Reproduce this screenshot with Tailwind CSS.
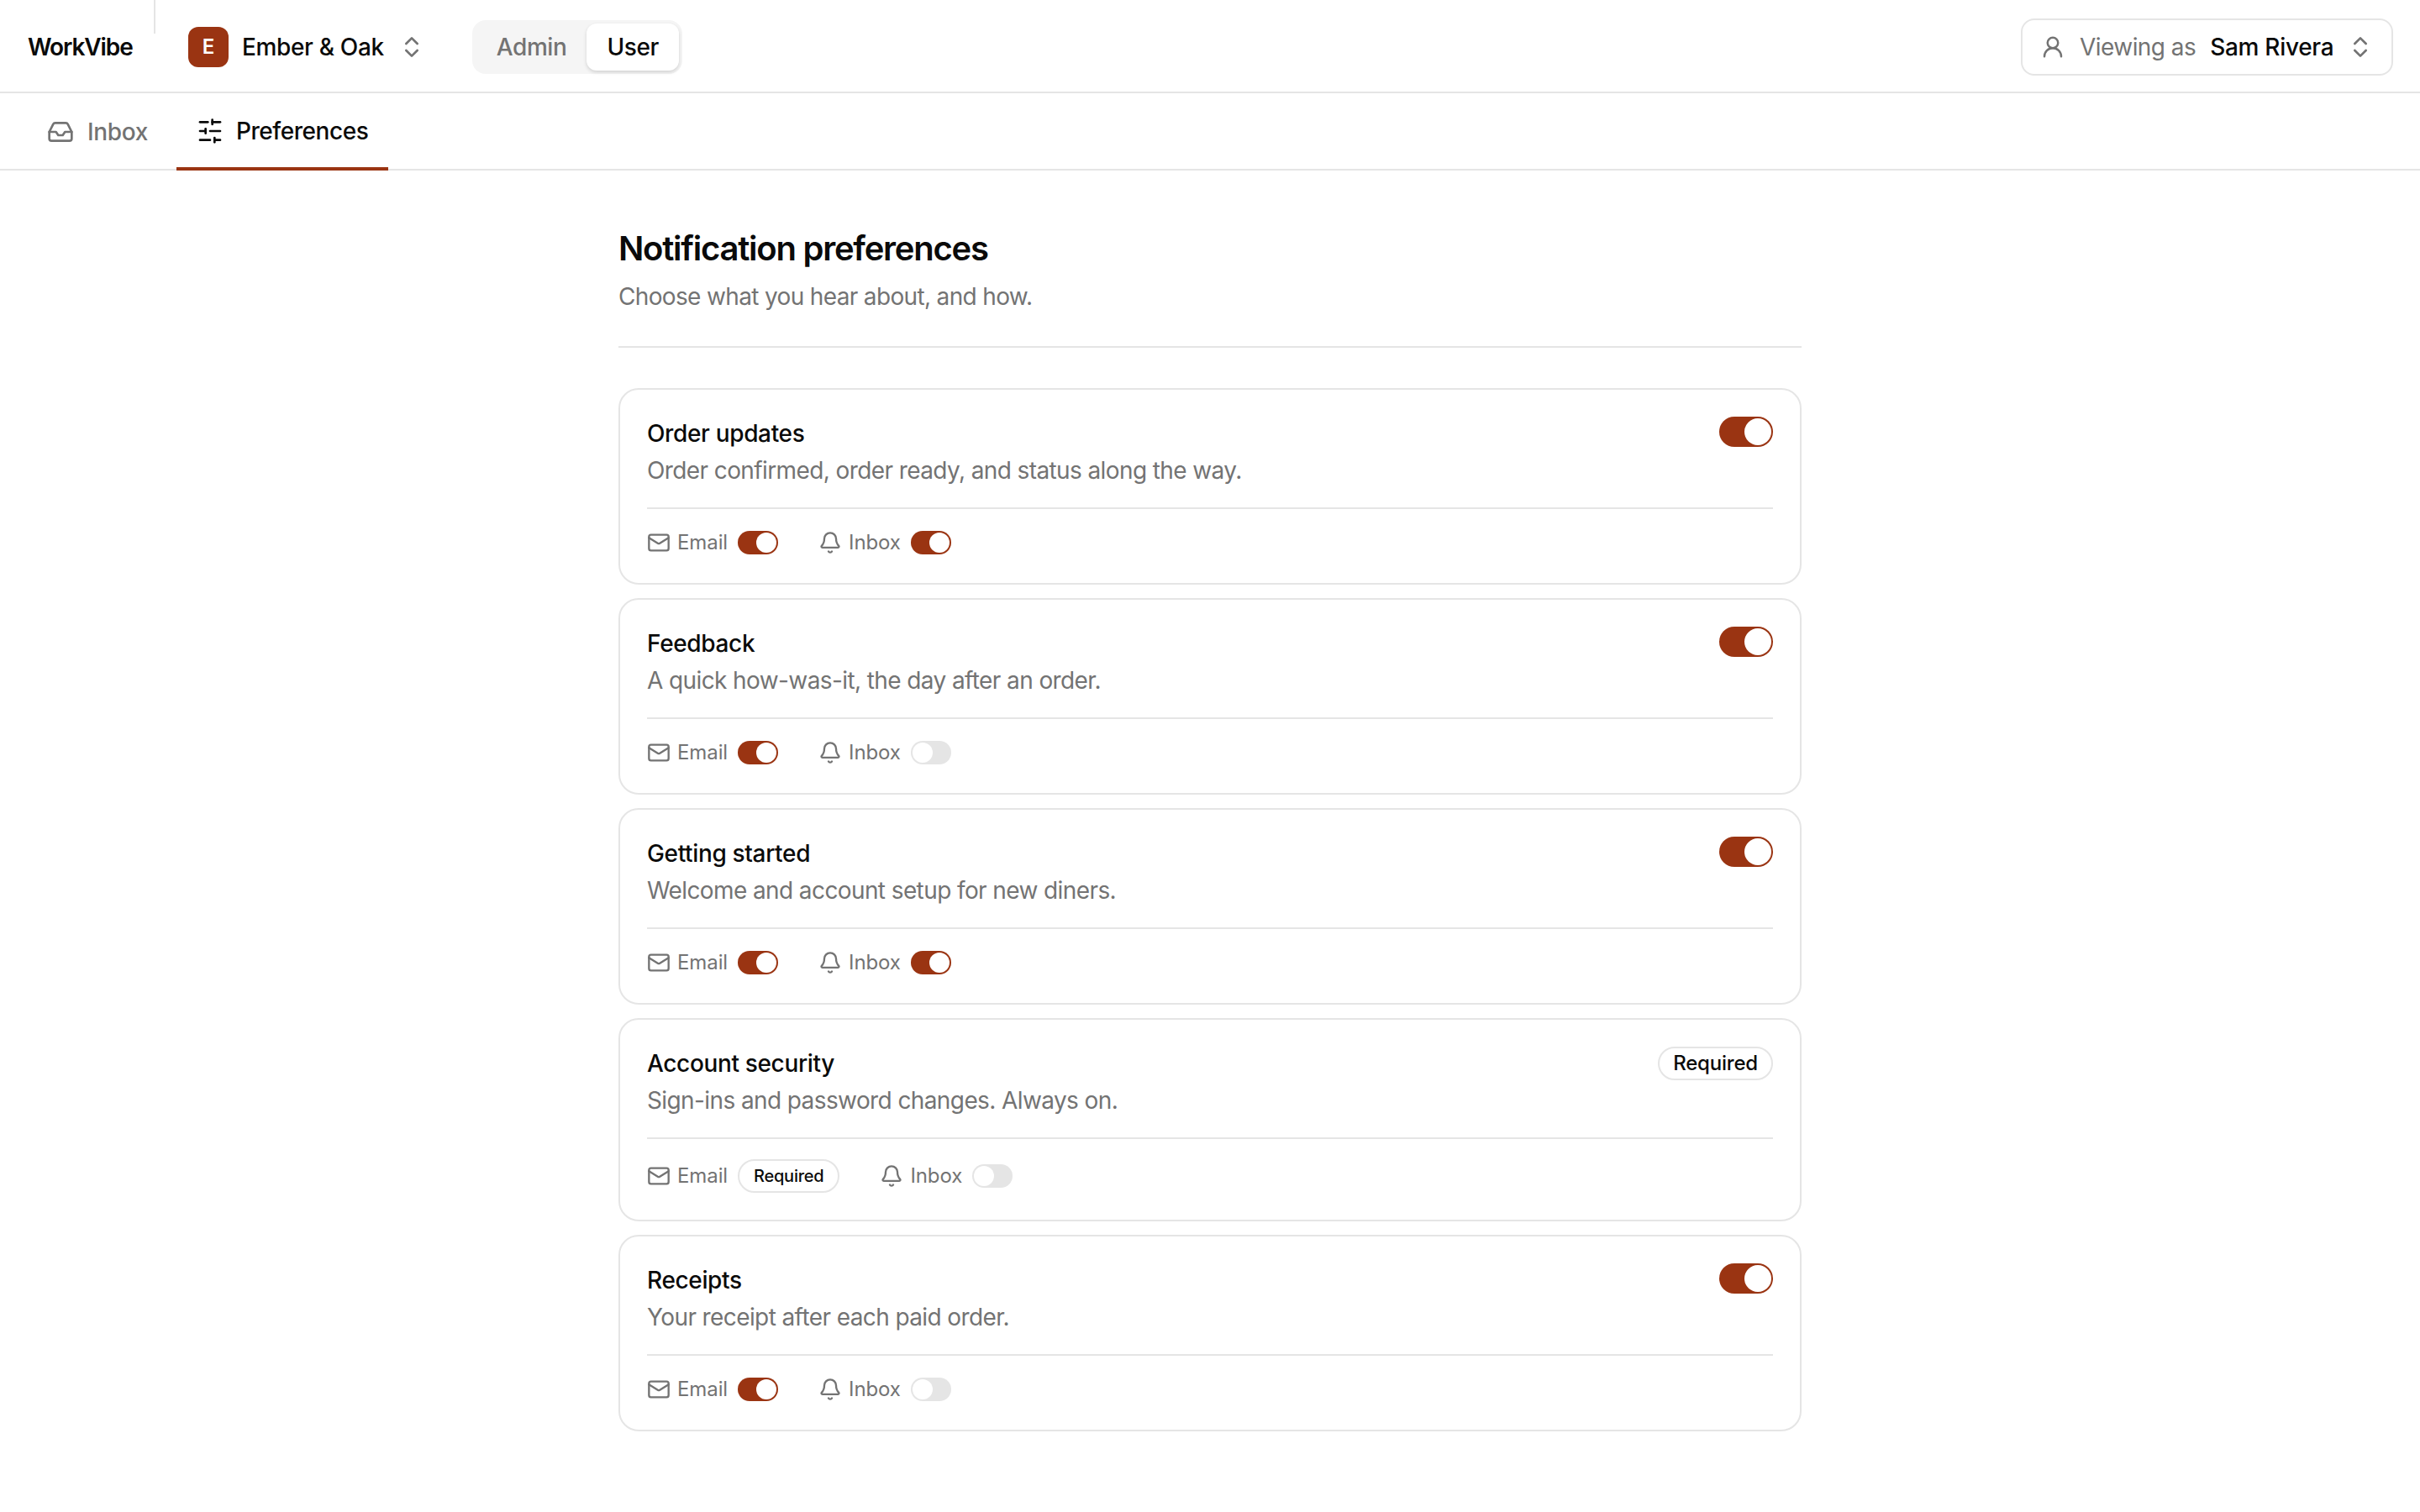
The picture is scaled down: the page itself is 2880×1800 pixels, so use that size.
<!DOCTYPE html>
<html lang="en">
<head>
  <meta charset="UTF-8" />
  <title>Notification preferences</title>
  <script src="https://cdn.jsdelivr.net/npm/@tailwindcss/browser@4"></script>
</head>
<body class="bg-white min-h-screen text-[#0a0a0a] font-['Inter',sans-serif]">
  <header class="relative h-[111px] pt-[2px] border-b-2 border-[#e5e5e5] flex items-center pl-[33px] pr-[32px]">
    <div class="absolute left-[183px] top-0 w-[2px] h-[40px] bg-[#e5e5e5]"></div>
    <span class="text-[28px] font-semibold tracking-[-1.1px] w-[191px]">WorkVibe</span>
    <div class="w-[48px] h-[48px] rounded-[12px] bg-[#9a3412] text-white text-[24px] font-semibold flex items-center justify-center">E</div>
    <span class="ml-[16px] text-[28px] font-medium tracking-[-0.35px]">Ember &amp; Oak</span>
    <svg class="ml-[17px] w-[32px] h-[32px] text-[#737373]" viewBox="0 0 24 24" fill="none" stroke="currentColor" stroke-width="2" stroke-linecap="round" stroke-linejoin="round"><path d="m7 15 5 5 5-5"/><path d="m7 9 5-5 5 5"/></svg>
    <div class="ml-[56px] h-[64px] rounded-[16px] bg-[#f5f5f5] flex items-center p-[4px] text-[28px] font-medium tracking-[-0.4px]">
      <span class="pl-[25px] pr-[24px] h-[56px] flex items-center text-[#737373]">Admin</span>
      <span class="px-[24px] h-[56px] flex items-center bg-white rounded-[12px] shadow-[0_2px_4px_rgba(0,0,0,0.15)]">User</span>
    </div>
    <div class="ml-auto h-[68px] w-[443px] rounded-[16px] border-2 border-[#e5e5e5] flex items-center pl-[21px] text-[28px]">
      <svg class="w-[30px] h-[30px] text-[#737373]" viewBox="0 0 24 24" fill="none" stroke="currentColor" stroke-width="2" stroke-linecap="round" stroke-linejoin="round"><circle cx="12" cy="8" r="5"/><path d="M20 21a8 8 0 0 0-16 0"/></svg>
      <span class="ml-[17px] text-[#737373] tracking-[-0.55px]">Viewing as</span>
      <span class="ml-[17px] font-medium tracking-[-0.3px]">Sam Rivera</span>
      <svg class="ml-[16px] w-[32px] h-[32px] text-[#737373]" viewBox="0 0 24 24" fill="none" stroke="currentColor" stroke-width="2" stroke-linecap="round" stroke-linejoin="round"><path d="m7 15 5 5 5-5"/><path d="m7 9 5-5 5 5"/></svg>
    </div>
  </header>

  <nav class="h-[92px] border-b-2 border-[#e5e5e5] flex pl-[32px] text-[28px] font-medium tracking-[-0.35px]">
    <a class="h-[92px] px-[24px] flex items-center gap-[16px] text-[#737373]">
      <svg class="w-[32px] h-[32px]" viewBox="0 0 24 24" fill="none" stroke="currentColor" stroke-width="2" stroke-linecap="round" stroke-linejoin="round"><polyline points="22 12 16 12 14 15 10 15 8 12 2 12"/><path d="M5.45 5.11 2 12v6a2 2 0 0 0 2 2h16a2 2 0 0 0 2-2v-6l-3.45-6.89A2 2 0 0 0 16.76 4H7.24a2 2 0 0 0-1.79 1.11z"/></svg>
      Inbox
    </a>
    <a class="ml-[10px] h-[92px] px-[24px] flex items-center gap-[15px] border-b-4 border-[#9a3412] pt-[2px] tracking-[-0.45px]">
      <svg class="w-[32px] h-[32px]" viewBox="0 0 24 24" fill="none" stroke="currentColor" stroke-width="2" stroke-linecap="round" stroke-linejoin="round"><line x1="21" x2="14" y1="4" y2="4"/><line x1="10" x2="3" y1="4" y2="4"/><line x1="21" x2="12" y1="12" y2="12"/><line x1="8" x2="3" y1="12" y2="12"/><line x1="21" x2="16" y1="20" y2="20"/><line x1="12" x2="3" y1="20" y2="20"/><line x1="14" x2="14" y1="2" y2="6"/><line x1="8" x2="8" y1="10" y2="14"/><line x1="16" x2="16" y1="18" y2="22"/></svg>
      Preferences
    </a>
  </nav>

  <main class="w-[1408px] mx-auto pt-[65px]">
    <h1 class="text-[40px] leading-[56px] font-semibold tracking-[-1.25px]">Notification preferences</h1>
    <p class="mt-[9px] text-[28px] leading-[40px] text-[#737373] tracking-[-0.65px]">Choose what you hear about, and how.</p>
    <div class="mt-[39px] h-[2px] bg-[#e5e5e5]"></div>
    <div id="cards" class="mt-[48px] flex flex-col gap-[16px]"></div>
  </main>

  <script>
    const mail = `<svg class="w-[28px] h-[28px]" viewBox="0 0 24 24" fill="none" stroke="currentColor" stroke-width="2" stroke-linecap="round" stroke-linejoin="round"><rect x="2" y="4" width="20" height="16" rx="2"/><path d="m22 7-8.97 5.7a1.94 1.94 0 0 1-2.06 0L2 7"/></svg>`;
    const bell = `<svg class="w-[28px] h-[28px]" viewBox="0 0 24 24" fill="none" stroke="currentColor" stroke-width="2" stroke-linecap="round" stroke-linejoin="round"><path d="M10.268 21a2 2 0 0 0 3.464 0"/><path d="M3.262 15.326A1 1 0 0 0 4 17h16a1 1 0 0 0 .74-1.673C19.41 13.956 18 12.499 18 8A6 6 0 0 0 6 8c0 4.499-1.411 5.956-2.738 7.326"/></svg>`;

    function smallToggle(on) {
      return on
        ? `<span class="w-[48px] h-[28px] rounded-full bg-[#9a3412] flex justify-end p-[2px]"><span class="w-[24px] h-[24px] rounded-full bg-white"></span></span>`
        : `<span class="w-[48px] h-[28px] rounded-full bg-[#e5e5e5] flex justify-start p-[2px]"><span class="w-[24px] h-[24px] rounded-full bg-white"></span></span>`;
    }

    function channel(icon, label, control) {
      return `<div class="flex items-center text-[24px] leading-[32px] text-[#737373] tracking-[-0.1px]">${icon}<span class="ml-[8px] mr-[12px]">${label}</span>${control}</div>`;
    }

    const items = [
      { title: 'Order updates', desc: 'Order confirmed, order ready, and status along the way.', email: true, inbox: true },
      { title: 'Feedback', desc: 'A quick how-was-it, the day after an order.', email: true, inbox: false },
      { title: 'Getting started', desc: 'Welcome and account setup for new diners.', email: true, inbox: true },
      { title: 'Account security', desc: 'Sign-ins and password changes. Always on.', required: true, inbox: false },
      { title: 'Receipts', desc: 'Your receipt after each paid order.', email: true, inbox: false },
    ];

    document.getElementById('cards').innerHTML = items.map(item => {
      const head = item.required
        ? `<span class="h-[40px] px-[16px] rounded-full border-2 border-[#e5e5e5] text-[24px] font-medium tracking-[-0.2px] flex items-center">Required</span>`
        : `<span class="w-[64px] h-[36px] rounded-full bg-[#9a3412] flex justify-end p-[2px]"><span class="w-[32px] h-[32px] rounded-full bg-white"></span></span>`;
      const emailControl = item.required
        ? `<span class="h-[40px] px-[17px] rounded-full border-2 border-[#e5e5e5] text-[20px] font-medium tracking-[-0.25px] text-[#0a0a0a] flex items-center">Required</span>`
        : smallToggle(item.email);
      return `<section class="rounded-[24px] border-2 border-[#e5e5e5] px-[32px] pt-[32px] pb-[32px]">
        <div class="flex justify-between items-start">
          <div>
            <h2 class="text-[28px] leading-[40px] font-medium tracking-[-0.35px]">${item.title}</h2>
            <p class="mt-[4px] text-[28px] leading-[40px] text-[#737373] tracking-[-0.6px]">${item.desc}</p>
          </div>
          ${head}
        </div>
        <div class="mt-[24px] h-[2px] bg-[#e5e5e5]"></div>
        <div class="mt-[24px] flex items-center gap-[48px] min-h-[32px]">
          ${channel(mail, 'Email', emailControl)}
          ${channel(bell, 'Inbox', smallToggle(item.inbox))}
        </div>
      </section>`;
    }).join('');
  </script>
</body>
</html>
